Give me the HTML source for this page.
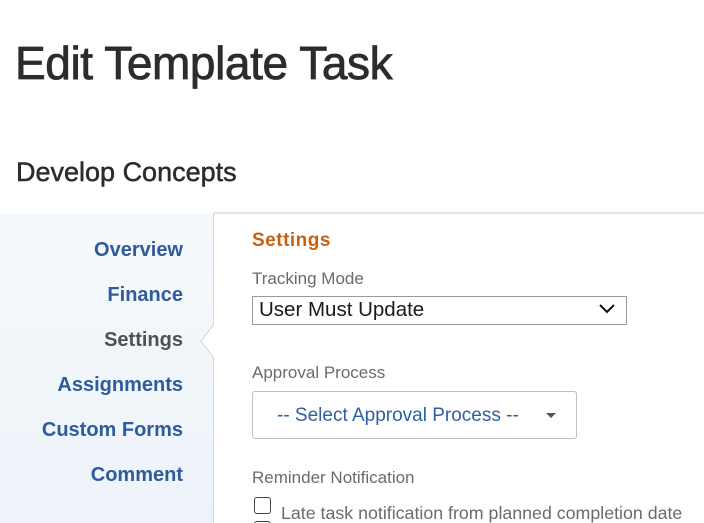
<!DOCTYPE html>
<html style="height:523px;overflow:hidden"><head><style>
body{margin:0;width:704px;height:523px;overflow:hidden;background:#fff;font-family:"Liberation Sans",sans-serif;position:relative}
.a{position:absolute;white-space:nowrap}
</style></head><body>
<div class="a" style="left:15px;top:36px;font-size:46px;color:#2c2c2c;letter-spacing:-0.4px;-webkit-text-stroke:0.8px #2c2c2c">Edit Template Task</div>
<div class="a" style="left:16px;top:157px;font-size:27px;color:#2c2c2c;-webkit-text-stroke:0.5px #2c2c2c">Develop Concepts</div>
<div class="a" style="left:0;top:213px;width:213px;height:310px;background:linear-gradient(#f6f9fc,#edf3f9);border-right:1px solid #cfd5dc"></div>
<div class="a" style="left:214px;top:212px;width:490px;height:3px;background:linear-gradient(#d8d8d8,#fff)"></div>
<svg class="a" style="left:199px;top:324px" width="16" height="34"><path d="M15 0 L2 17 L15 34" fill="#fff" stroke="#cfd5dc"/></svg>
<div class="a" style="right:521px;top:228px;font-size:20px;font-weight:bold;color:#2d5b9b;text-align:right;line-height:45px">Overview<br>Finance<br><span style="color:#505050">Settings</span><br>Assignments<br>Custom Forms<br>Comment</div>
<div class="a" style="left:252px;top:230px;font-size:19px;font-weight:bold;color:#c8600f;letter-spacing:0.5px">Settings</div>
<div class="a" style="left:252px;top:269px;font-size:17px;color:#6b6b6b">Tracking Mode</div>
<div class="a" style="left:252px;top:296px;width:373px;height:27px;border:1px solid #9a9a9a"></div>
<div class="a" style="left:259px;top:298px;font-size:20.5px;color:#1a1a1a">User Must Update</div>
<svg class="a" style="left:598px;top:303px" width="18" height="12"><path d="M2 2 L9 9 L16 2" fill="none" stroke="#111" stroke-width="2"/></svg>
<div class="a" style="left:252px;top:363px;font-size:17px;color:#6b6b6b">Approval Process</div>
<div class="a" style="left:252px;top:391px;width:323px;height:46px;border:1px solid #bfbfbf;border-radius:3px"></div>
<div class="a" style="left:277px;top:405px;font-size:19px;color:#2e5fa3">-- Select Approval Process --</div>
<svg class="a" style="left:546px;top:413px" width="10" height="6"><path d="M0 0 L10 0 L5 5Z" fill="#555"/></svg>
<div class="a" style="left:252px;top:468px;font-size:17px;color:#6b6b6b">Reminder Notification</div>
<div class="a" style="left:254px;top:497px;width:15px;height:15px;border:1.5px solid #444;border-radius:3px"></div>
<div class="a" style="left:254px;top:521px;width:15px;height:15px;border:1.5px solid #444;border-radius:3px"></div>
<div class="a" style="left:281px;top:503px;font-size:17.8px;color:#6b6b6b">Late task notification from planned completion date</div>
</body></html>
